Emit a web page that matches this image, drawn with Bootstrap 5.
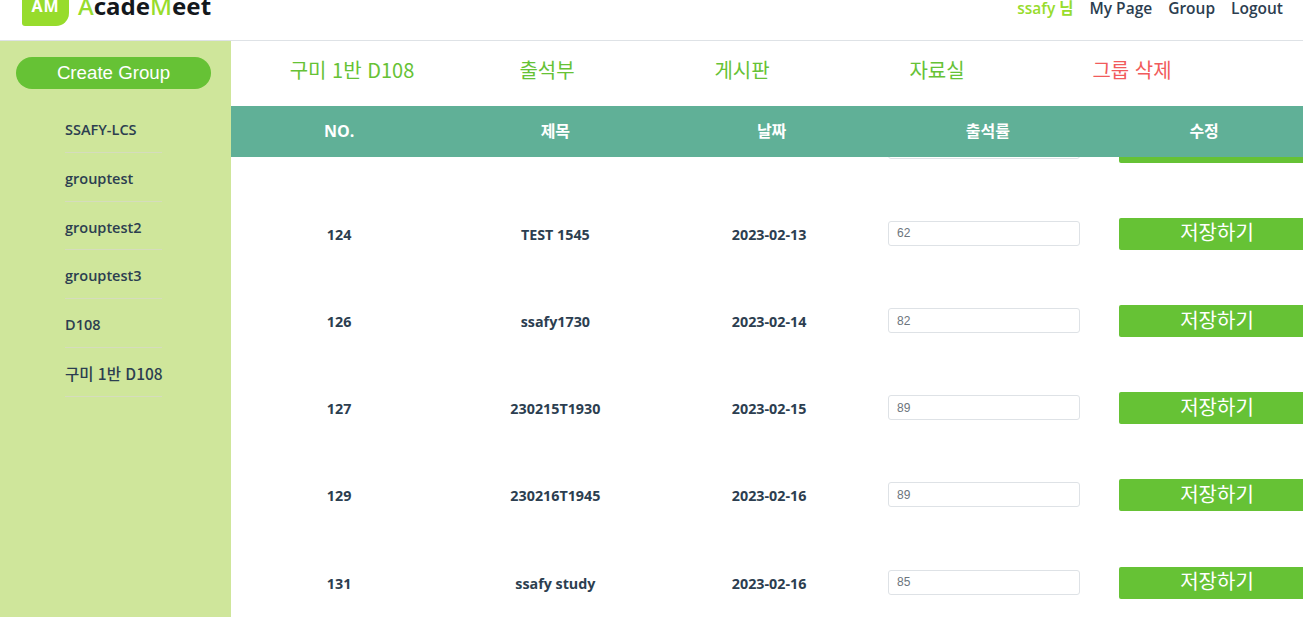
<!DOCTYPE html>
<html lang="ko">
<head>
<meta charset="utf-8">
<title>AcadeMeet</title>
<link href="https://cdn.jsdelivr.net/npm/bootstrap@5.3.0/dist/css/bootstrap.min.css" rel="stylesheet">
<style>
html,body{height:100%;overflow:hidden}
body{font-family:"Open Sans","Noto Sans CJK KR",sans-serif;color:#2c3e50;background:#fff}
.topbar{height:41px;border-bottom:1px solid #dee2e6;padding:0 20px 0 22px;overflow:hidden}
.logo-box{width:47px;height:40px;margin-top:-14px;background:#97dc2c;border-radius:0 0 13px 3px;color:#fff;font:700 16px/1 "Noto Sans",sans-serif;letter-spacing:1px;padding-bottom:12px}
.logo-text{font:700 24px/1 "Noto Sans",sans-serif;color:#14181c;margin:-6px 0 0 9px;letter-spacing:0}
.logo-text span{color:#97dc2c;font-weight:500}
.top-links{margin-top:-3.5px;font-weight:600;font-size:15.5px;gap:16px}
.top-links a{color:#2c3e50;text-decoration:none}
.top-user{color:#97dc2c}
.shell{height:576px}
.side{width:231px;background:#cfe69b;padding-top:16px}
.create-btn{display:block;width:195px;height:32px;margin-left:16px;padding:0;border:0;border-radius:16px;background:#66c235;color:#fff;font:18.7px/32px "Liberation Sans",sans-serif}
.side-list{margin:15px 0 0 65px;width:97px;padding:0;list-style:none;font-weight:600;font-size:14.5px;white-space:nowrap}
.side-list li{height:48.8px;padding-top:16px;border-bottom:1px solid #d5dcbd;line-height:20px}
.side-list li.ko-item{padding-top:15px;font-family:"Noto Sans CJK KR",sans-serif;font-weight:500;font-size:15.5px}
.main-pane{width:1072px;min-width:0}
.tabs{height:65px;padding-left:23.5px;font-family:"Noto Sans CJK KR",sans-serif;font-size:20px;font-weight:400}
.tab-item{width:195px;text-align:center;color:#66c235;line-height:58px}
.tab-del{color:#f15b5b}
.thead-bar{height:51px;background:#60b097;color:#fff;font-weight:700;font-size:16px;line-height:51px;text-align:center;position:relative;z-index:1}
.rows-view{height:460px;overflow:hidden}
.rows-inner{margin-top:-54.3px}
.drow{height:87.2px;font-weight:700;font-size:14.3px;text-align:center;line-height:90px}
.cell-w{width:216.25px;flex:none}
.date-cell{padding-right:5px}
.in-rate{display:block;width:192px;height:25px;margin-left:8.25px;margin-top:31px;padding:0 8px;border:1px solid #dee2e6;border-radius:3px;font:12px/23px "Liberation Sans",sans-serif;color:#6c757d;background:#fff}
.save-btn{display:block;width:196px;height:32px;margin:28px 0 0 23px;padding:0 0 3px;border:0;border-radius:2px;background:#66c235;color:#fff;font:400 20px/28px "Noto Sans CJK KR",sans-serif}
</style>
</head>
<body>
<header class="topbar d-flex justify-content-between align-items-start">
  <div class="d-flex align-items-start">
    <div class="logo-box d-flex align-items-end justify-content-center">AM</div>
    <div class="logo-text"><span>A</span>cade<span>M</span>eet</div>
  </div>
  <div class="top-links d-flex">
    <span class="top-user">ssafy 님</span><a href="#">My Page</a><a href="#">Group</a><a href="#">Logout</a>
  </div>
</header>
<div class="shell d-flex">
  <aside class="side flex-shrink-0">
    <button class="create-btn" type="button">Create Group</button>
    <ul class="side-list">
      <li>SSAFY-LCS</li><li>grouptest</li><li>grouptest2</li><li>grouptest3</li><li>D108</li><li class="ko-item">구미 1반 D108</li>
    </ul>
  </aside>
  <main class="main-pane flex-shrink-0">
    <nav class="tabs d-flex">
      <div class="tab-item">구미 1반 D108</div><div class="tab-item">출석부</div><div class="tab-item">게시판</div><div class="tab-item">자료실</div><div class="tab-item tab-del">그룹 삭제</div>
    </nav>
    <div class="thead-bar d-flex">
      <div class="cell-w">NO.</div><div class="cell-w">제목</div><div class="cell-w">날짜</div><div class="cell-w">출석률</div><div class="cell-w">수정</div>
    </div>
    <div class="rows-view">
      <div class="rows-inner">
        <div class="drow d-flex"><div class="cell-w">123</div><div class="cell-w">TEST</div><div class="cell-w date-cell">2023-02-13</div><div class="cell-w"><input class="in-rate" value="70"></div><div class="cell-w"><button class="save-btn" type="button">저장하기</button></div></div>
        <div class="drow d-flex"><div class="cell-w">124</div><div class="cell-w">TEST 1545</div><div class="cell-w date-cell">2023-02-13</div><div class="cell-w"><input class="in-rate" value="62"></div><div class="cell-w"><button class="save-btn" type="button">저장하기</button></div></div>
        <div class="drow d-flex"><div class="cell-w">126</div><div class="cell-w">ssafy1730</div><div class="cell-w date-cell">2023-02-14</div><div class="cell-w"><input class="in-rate" value="82"></div><div class="cell-w"><button class="save-btn" type="button">저장하기</button></div></div>
        <div class="drow d-flex"><div class="cell-w">127</div><div class="cell-w">230215T1930</div><div class="cell-w date-cell">2023-02-15</div><div class="cell-w"><input class="in-rate" value="89"></div><div class="cell-w"><button class="save-btn" type="button">저장하기</button></div></div>
        <div class="drow d-flex"><div class="cell-w">129</div><div class="cell-w">230216T1945</div><div class="cell-w date-cell">2023-02-16</div><div class="cell-w"><input class="in-rate" value="89"></div><div class="cell-w"><button class="save-btn" type="button">저장하기</button></div></div>
        <div class="drow d-flex"><div class="cell-w">131</div><div class="cell-w">ssafy study</div><div class="cell-w date-cell">2023-02-16</div><div class="cell-w"><input class="in-rate" value="85"></div><div class="cell-w"><button class="save-btn" type="button">저장하기</button></div></div>
      </div>
    </div>
  </main>
</div>
<script src="https://cdn.jsdelivr.net/npm/bootstrap@5.3.0/dist/js/bootstrap.bundle.min.js"></script>
</body>
</html>
